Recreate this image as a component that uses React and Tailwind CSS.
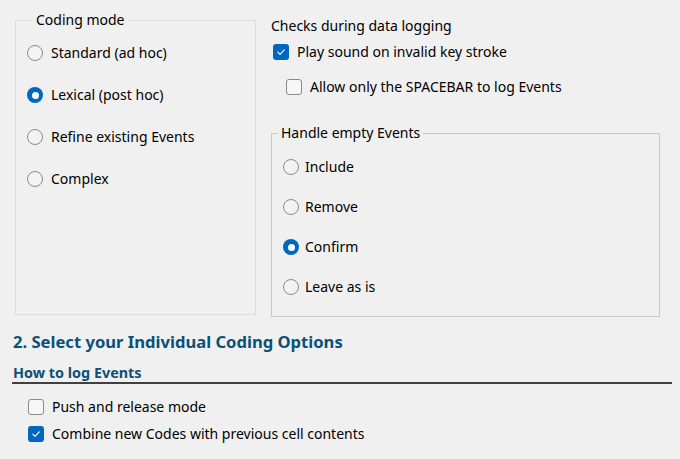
import React from "react";

function Radio({ checked, label, rowClass, gapClass = "ml-2" }) {
  return (
    <div className={`flex items-center ${rowClass}`}>
      {checked ? (
        <span className="w-4 h-4 rounded-full bg-[#0067c0] flex items-center justify-center shrink-0">
          <span className="w-[7px] h-[7px] rounded-full bg-white" />
        </span>
      ) : (
        <span className="w-4 h-4 rounded-full border border-[#8a8a8a] bg-[#f3f3f3] shrink-0" />
      )}
      <span className={`${gapClass} leading-[20px]`}>{label}</span>
    </div>
  );
}

function Checkbox({ checked, label, rowClass }) {
  return (
    <div className={`flex items-center ${rowClass}`}>
      {checked ? (
        <span className="w-4 h-4 rounded-[3px] bg-[#0067c0] flex items-center justify-center shrink-0">
          <svg width="10" height="10" viewBox="0 0 10 10">
            <path d="M1.8 5.2 L4 7.3 L8.3 2.8" fill="none" stroke="white" strokeWidth="1.1" strokeLinecap="round" strokeLinejoin="round" />
          </svg>
        </span>
      ) : (
        <span className="w-4 h-4 rounded-[3px] border border-[#8a8a8a] bg-[#f7f7f7] shrink-0" />
      )}
      <span className="ml-2 leading-[20px]">{label}</span>
    </div>
  );
}

export default function App() {
  return (
    <div className="w-[680px] h-[459px] bg-[#f0f0f0] overflow-hidden font-['Noto_Sans',sans-serif] text-[14px] text-black">
      <div className="flex items-start pt-[10px] pl-[15px]">
        <fieldset className="w-[241px] h-[305px] border border-[#dcdcdc] p-0 m-0 shrink-0">
          <legend className="ml-[16px] px-[4px] leading-[20px]">Coding mode</legend>
          <div className="pl-[11px] pt-[2px]">
            <Radio label="Standard (ad hoc)" rowClass="h-[42px]" />
            <Radio checked label="Lexical (post hoc)" rowClass="h-[42px]" />
            <Radio label="Refine existing Events" rowClass="h-[42px]" />
            <Radio label="Complex" rowClass="h-[42px]" />
          </div>
        </fieldset>
        <div className="ml-[15px] flex flex-col">
          <div className="mt-[6px] leading-[20px]">Checks during data logging</div>
          <div className="pl-[2px]">
            <Checkbox checked label="Play sound on invalid key stroke" rowClass="mt-[6px] h-[20px]" />
            <Checkbox label="Allow only the SPACEBAR to log Events" rowClass="mt-[15px] h-[20px] ml-[13px]" />
          </div>
          <fieldset className="mt-[26px] w-[389px] h-[194px] border border-[#c8c8c8] p-0 m-0">
            <legend className="ml-[6px] px-[3px] leading-[20px]">Handle empty Events</legend>
            <div className="pl-[11px] pt-[4px]">
              <Radio label="Include" rowClass="h-[40px]" gapClass="ml-[6px]" />
              <Radio label="Remove" rowClass="h-[40px]" gapClass="ml-[6px]" />
              <Radio checked label="Confirm" rowClass="h-[40px]" gapClass="ml-[6px]" />
              <Radio label="Leave as is" rowClass="h-[40px]" gapClass="ml-[6px]" />
            </div>
          </fieldset>
        </div>
      </div>
      <div className="mt-[13px] pl-[13px] text-[16.6px] font-bold leading-[24px] text-[#0b5078]">
        2. Select your Individual Coding Options
      </div>
      <div className="mt-[10px] ml-[12px] mr-[8px] border-b-2 border-[#404040] pl-[1px] text-[14.4px] font-bold leading-[18px] text-[#0b5078]">
        How to log Events
      </div>
      <div className="pl-[28px]">
        <Checkbox label="Push and release mode" rowClass="mt-[13px] h-[20px]" />
        <Checkbox checked label="Combine new Codes with previous cell contents" rowClass="mt-[7px] h-[20px]" />
      </div>
    </div>
  );
}
